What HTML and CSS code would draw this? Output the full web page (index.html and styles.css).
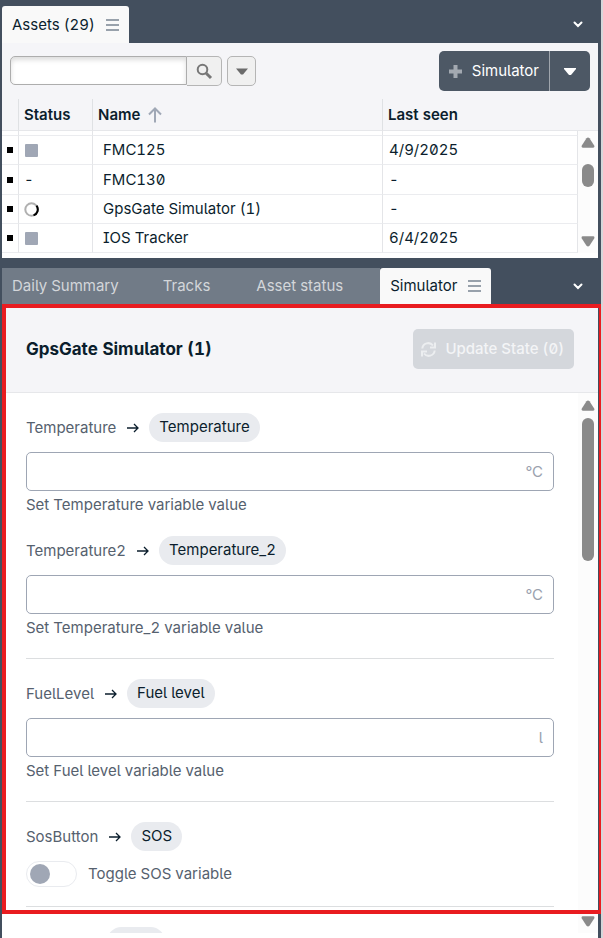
FILE: index.html
```html
<!DOCTYPE html>
<html lang="en">
<head>
  <meta charset="UTF-8">
  <meta name="viewport" content="width=device-width, initial-scale=1">
  <title>Assets</title>
  <link rel="stylesheet" href="styles.css">
</head>
<body>
  <!-- Assets panel -->
  <section class="panel">
    <div class="tabbar">
      <button class="tab active">Assets (29)
        <svg class="menu" viewBox="0 0 13 12"><path d="M0 1h13M0 6h13M0 11h13"/></svg>
      </button>
      <button class="collapse" aria-label="Collapse assets">
        <svg width="10" height="7" viewBox="0 0 10 7"><path d="M1.500 1.500L5 5l3.500-3.500"/></svg>
      </button>
    </div>
    <div class="toolbar">
      <div class="search">
        <input type="text" aria-label="Search assets">
        <button class="grey-btn search-btn" aria-label="Search">
          <svg width="17" height="17" viewBox="0 0 17 17"><circle cx="6.500" cy="6.500" r="4.800"/><path d="M10.200 10.200L15 15"/></svg>
        </button>
      </div>
      <button class="grey-btn filter-btn" aria-label="Search options">
        <svg width="12" height="7" viewBox="0 0 12 7"><path d="M0 0.500h12L7 6.500H5z"/></svg>
      </button>
      <div class="split">
        <button class="add">
          <svg width="13" height="13" viewBox="0 0 13 13"><path d="M4.500 0h4v4.500H13v4H8.500V13h-4V8.500H0v-4h4.500z"/></svg>
          Simulator
        </button>
        <button class="more" aria-label="More">
          <svg width="12" height="7" viewBox="0 0 12 7"><path d="M0 0h12v1L7 7H5L0 1z"/></svg>
        </button>
      </div>
    </div>
    <div class="list">
      <table>
        <thead>
          <tr>
            <th class="col-mark"></th>
            <th class="col-status">Status</th>
            <th class="col-name">Name
              <svg width="14" height="16" viewBox="0 0 14 16"><path d="M7 15.500V1.500M1 7.500l6-6 6 6"/></svg>
            </th>
            <th>Last seen</th>
          </tr>
        </thead>
        <tbody>
          <tr class="cut"><td></td><td></td><td></td><td></td></tr>
          <tr>
            <td><i class="mark"></i></td>
            <td><i class="state"></i></td>
            <td>FMC125</td>
            <td>4/9/2025</td>
          </tr>
          <tr class="tall">
            <td><i class="mark"></i></td>
            <td>-</td>
            <td>FMC130</td>
            <td>-</td>
          </tr>
          <tr>
            <td><i class="mark"></i></td>
            <td><svg class="spinner" width="15" height="15" viewBox="0 0 15 15"><circle cx="7.500" cy="7.500" r="6.200"/><path d="M12.500 3.700a6.200 6.200 0 0 1-3 9.700"/></svg></td>
            <td>GpsGate Simulator (1)</td>
            <td>-</td>
          </tr>
          <tr>
            <td><i class="mark"></i></td>
            <td><i class="state"></i></td>
            <td>IOS Tracker</td>
            <td>6/4/2025</td>
          </tr>
        </tbody>
      </table>
      <div class="scrollbar" aria-hidden="true">
        <svg width="14" height="11" viewBox="0 0 14 11"><path d="M5.500 1.200q1.500-1.600 3 0l4.700 7.300q.8 2-1 2.200H1.800q-1.800-.2-1-2.200z"/></svg>
        <span class="thumb"></span>
        <svg class="down" width="14" height="11" viewBox="0 0 14 11"><path d="M5.500 9.800q1.500 1.600 3 0l4.700-7.300q.8-2-1-2.200H1.800q-1.800.2-1 2.200z"/></svg>
      </div>
    </div>
  </section>

  <!-- Simulator panel -->
  <section class="panel simulator">
    <div class="tabbar">
      <button class="tab">Daily Summary</button>
      <button class="tab">Tracks</button>
      <button class="tab">Asset status</button>
      <button class="tab active">Simulator
        <svg class="menu" viewBox="0 0 13 12"><path d="M0 1h13M0 6h13M0 11h13"/></svg>
      </button>
      <button class="collapse" aria-label="Collapse simulator">
        <svg width="10" height="7" viewBox="0 0 10 7"><path d="M1.500 1.500L5 5l3.500-3.500"/></svg>
      </button>
    </div>
    <div class="content">
      <header class="head">
        <h1>GpsGate Simulator (1)</h1>
        <button class="update" disabled>
          <svg width="15" height="15" viewBox="0 0 15 15"><path d="M1.300 6.500A6 6 0 0 1 12 3.500M14 .5v5H9M13.700 8.500A6 6 0 0 1 3 11.500M1 14.500v-5h5"/></svg>
          Update State (0)
        </button>
      </header>
      <div class="body">
        <form class="fields">
          <div class="group">
            <div class="field">
              <div class="name"><label for="temp1">Temperature</label><svg class="arrow" viewBox="0 0 12 10"><path d="M0 5h11M7 1l4 4-4 4"/></svg><span class="pill">Temperature</span></div>
              <div class="box"><input type="text" id="temp1"><span>°C</span></div>
              <p>Set Temperature variable value</p>
            </div>
            <div class="field">
              <div class="name"><label for="temp2">Temperature2</label><svg class="arrow" viewBox="0 0 12 10"><path d="M0 5h11M7 1l4 4-4 4"/></svg><span class="pill">Temperature_2</span></div>
              <div class="box"><input type="text" id="temp2"><span>°C</span></div>
              <p>Set Temperature_2 variable value</p>
            </div>
          </div>
          <div class="group">
            <div class="field">
              <div class="name"><label for="fuel">FuelLevel</label><svg class="arrow" viewBox="0 0 12 10"><path d="M0 5h11M7 1l4 4-4 4"/></svg><span class="pill">Fuel level</span></div>
              <div class="box"><input type="text" id="fuel"><span>l</span></div>
              <p>Set Fuel level variable value</p>
            </div>
          </div>
          <div class="group">
            <div class="field">
              <div class="name"><span>SosButton</span><svg class="arrow" viewBox="0 0 12 10"><path d="M0 5h11M7 1l4 4-4 4"/></svg><span class="pill">SOS</span></div>
              <label class="toggle"><input type="checkbox">Toggle SOS variable</label>
            </div>
          </div>
          <div class="group">
            <div class="name next"><span class="pill"></span></div>
          </div>
        </form>
        <div class="scrollbar" aria-hidden="true">
          <svg width="14" height="11" viewBox="0 0 14 11"><path d="M5.500 1.200q1.500-1.600 3 0l4.700 7.300q.8 2-1 2.200H1.800q-1.800-.2-1-2.200z"/></svg>
          <span class="thumb"></span>
          <svg class="down" width="14" height="11" viewBox="0 0 14 11"><path d="M5.500 9.800q1.500 1.600 3 0l4.700-7.300q.8-2-1-2.200H1.800q-1.800.2-1 2.200z"/></svg>
        </div>
      </div>
    </div>
  </section>
</body>
</html>
```
FILE: styles.css
```css
* {
  box-sizing: border-box;
}
body {
  margin: 0;
  height: 100vh;
  display: flex;
  flex-direction: column;
  overflow: hidden;
  background: #434f5e;
  border-right: 2px solid #d5d7da;
  padding: 0 3px 0 2px;
  font-family: Inter, sans-serif;
  font-size: 15px;
  line-height: 20px;
  font-feature-settings: "zero", "tnum", "cv05", "cv08";
  color: #0b1e2d;
}
button,
input {
  font: inherit;
  font-feature-settings: inherit;
  color: inherit;
  margin: 0;
}
button {
  border: none;
  padding: 0;
  background: none;
  display: flex;
  align-items: center;
  justify-content: center;
}
svg {
  flex: none;
  fill: none;
}

/* Tabs */
.tabbar {
  display: flex;
  height: 43px;
  padding-top: 6px;
}
.tab {
  padding: 0 10px;
  background: #717b87;
  color: #d3d6da;
  white-space: nowrap;
}
.tab.active {
  gap: 11px;
  background: #f9f9f9;
  color: #0b1e2d;
  border-radius: 3px 3px 0 0;
}
.menu {
  width: 13px;
  height: 12px;
  stroke: #98a1ab;
  stroke-width: 2;
}
.collapse {
  width: 40px;
  margin-left: auto;
}
.collapse svg {
  stroke: #fff;
  stroke-width: 2;
  stroke-linecap: round;
}

/* Toolbar */
.toolbar {
  display: flex;
  align-items: flex-start;
  gap: 5px;
  height: 56px;
  padding: 8px;
  background: #f5f5f8;
}
.search {
  display: flex;
  margin-top: 5px;
}
.search input {
  width: 177px;
  height: 29px;
  padding: 0 8px;
  border: 1px solid #adadad;
  border-radius: 5px 0 0 5px;
  background: #fff;
  box-shadow: inset 0 3px 5px #ddd;
}
.grey-btn {
  height: 30px;
  background: #f0f0f0;
  border: 1px solid #b5b5b5;
}
.search-btn {
  width: 35px;
  border-left: none;
  border-radius: 0 5px 5px 0;
}
.search-btn svg {
  stroke: #777;
  stroke-width: 2;
}
.search-btn path {
  stroke-width: 3;
}
.filter-btn {
  width: 29px;
  margin-top: 5px;
  border-radius: 5px;
}
.filter-btn svg {
  fill: #6b6b6b;
}
.split {
  display: flex;
  height: 40px;
  margin-left: auto;
  border-radius: 5px;
  background: #4d5865;
  color: #fff;
}
.add {
  gap: 10px;
  padding: 0 10px;
}
.add svg {
  fill: #a3a9b1;
}
.more {
  width: 41px;
  border-left: 1px solid #a0a6ad;
}
.more svg {
  fill: #fff;
}

/* Asset list */
.list {
  display: flex;
  align-items: stretch;
  background: #f5f5f8;
  border-bottom: 5px solid #fff;
}
table {
  flex: 1;
  border-collapse: separate;
  border-spacing: 0;
  table-layout: fixed;
}
th {
  height: 32px;
  padding: 0 5px;
  text-align: left;
  font-weight: 600;
  border-right: 1px solid #dfe1e4;
  border-bottom: 1px solid #e6e7ea;
}
th:last-child {
  border-right: none;
}
.col-mark {
  width: 17px;
}
.col-status {
  width: 74px;
}
.col-name {
  width: 290px;
}
.col-name svg {
  margin-left: 4px;
  vertical-align: -3px;
  stroke: #a0a8b6;
  stroke-width: 2;
}
td {
  height: 29px;
  padding: 0 6px;
  background: #fff;
  border-right: 1px solid #e4e5e8;
  border-bottom: 1px solid #ebecef;
}
td:first-child,
td:nth-child(2) {
  padding: 0 5px;
}
td:nth-child(3) {
  padding: 0 10px;
}
.cut td {
  height: 5px;
}
.tall td {
  height: 30px;
}
.mark {
  display: block;
  width: 6px;
  height: 6px;
  background: #000;
}
.state {
  display: block;
  width: 13px;
  height: 13px;
  margin-left: 1px;
  border-radius: 1px;
  background: #a0a7b5;
}
.spinner {
  display: block;
  stroke: #b0b0b0;
  stroke-width: 2;
}
.spinner path {
  stroke: #000;
}

/* Scrollbars */
.scrollbar {
  flex: none;
  display: flex;
  flex-direction: column;
  align-items: center;
  gap: 7px;
  width: 20px;
  padding: 7px 0 6px;
  background: #fcfcfc;
}
.scrollbar svg {
  fill: #8a8a8a;
}
.thumb {
  width: 12px;
  height: 143px;
  border-radius: 6px;
  background: #8a8a8a;
}
.down {
  margin-top: auto;
}
.list .scrollbar {
  gap: 0;
  margin-top: 31px;
  padding-top: 6px;
  border-top: 1px solid #e6e7ea;
}
.list .thumb {
  height: 23px;
  margin-top: 16px;
}

/* Simulator */
.simulator {
  flex: 1;
  min-height: 0;
  display: flex;
  flex-direction: column;
  padding-top: 10px;
}
.simulator .tabbar {
  height: 36px;
  padding: 0;
}
.simulator .tab:nth-child(2) {
  padding: 0 36px 0 34px;
}
.simulator .tab:nth-child(3) {
  padding-right: 37px;
}
.content {
  position: relative;
  flex: 1;
  min-height: 0;
  display: flex;
  flex-direction: column;
  padding-bottom: 5px;
  background: #fff;
}
/* highlight frame */
.content::after {
  content: "";
  position: absolute;
  inset: 0 -5px 24px 0;
  border: 4px solid #e91c20;
  pointer-events: none;
}
.head {
  display: flex;
  align-items: center;
  justify-content: space-between;
  padding: 25px 24px 23px;
  background: #f5f5f8;
  border-bottom: 1px solid #e6e7ea;
}
h1 {
  margin: 0;
  font-size: 17px;
  font-weight: 700;
}
.update {
  height: 40px;
  gap: 9px;
  padding: 0 10px 0 8px;
  border-radius: 5px;
  background: #d4d7dc;
  color: #f3f4f6;
  font-weight: 500;
}
.update svg {
  stroke: #eceef0;
  stroke-width: 2;
}
.body {
  flex: 1;
  min-height: 0;
  display: flex;
}
.fields {
  flex: 1;
  overflow: hidden;
  padding: 0 24px;
}
.group {
  display: flex;
  flex-direction: column;
  gap: 17px;
  padding: 20px 0 16px;
  border-bottom: 1px solid #dcdee0;
}
.name {
  display: flex;
  align-items: center;
  height: 29px;
  margin-bottom: 10px;
  color: #56616e;
}
.arrow {
  width: 12px;
  height: 10px;
  margin: 0 10px 0 11px;
  stroke: #0b1e2d;
  stroke-width: 1.3;
}
.pill {
  height: 29px;
  padding: 4px 10px;
  border-radius: 15px;
  background: #e9ebef;
  color: #0b1e2d;
}
.next .pill {
  width: 58px;
  margin-left: 81px;
}
.box {
  display: flex;
  align-items: center;
  height: 39px;
  padding: 0 10px;
  border: 1px solid #9ea6b4;
  border-radius: 5px;
  color: #9aa1ae;
}
.box input {
  flex: 1;
  min-width: 0;
  border: none;
  outline: none;
  background: none;
}
.field p {
  margin: 0;
  line-height: 28px;
  color: #56616e;
}
.toggle {
  display: flex;
  align-items: center;
  gap: 11px;
  color: #56616e;
  padding-bottom: 3px;
}
.toggle input {
  appearance: none;
  width: 51px;
  height: 26px;
  padding: 2px 3px;
  border: 1px solid #e9ebef;
  border-radius: 13px;
}
.toggle input::before {
  content: "";
  display: block;
  width: 20px;
  height: 20px;
  border-radius: 50%;
  background: #a0a7b5;
}
```
